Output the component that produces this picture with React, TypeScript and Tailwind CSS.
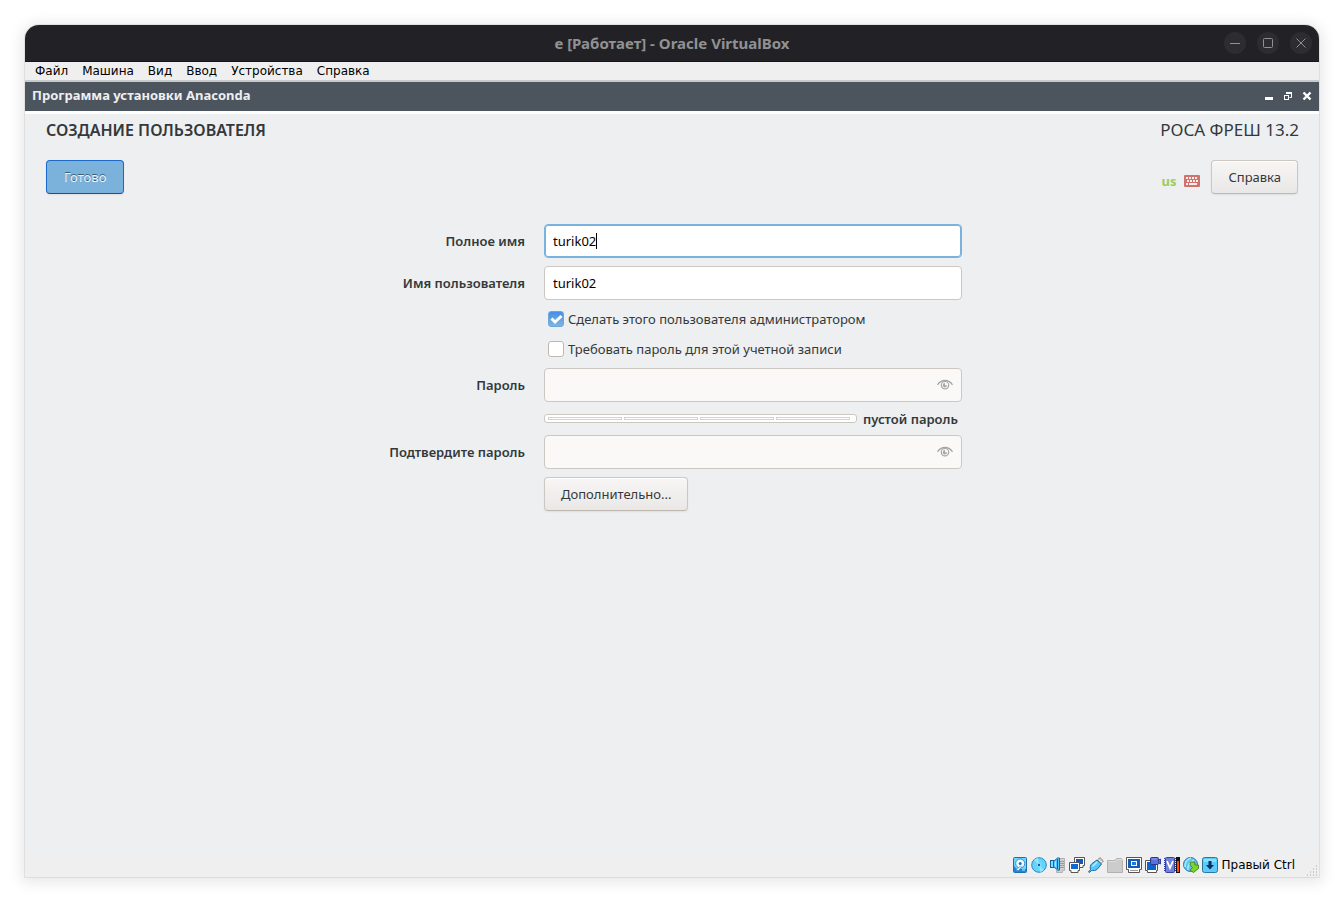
import { useState } from 'react'
import type { ReactNode } from 'react'
import { clsx } from 'clsx'

const menus = ['Файл', 'Машина', 'Вид', 'Ввод', 'Устройства', 'Справка']

const Glyph = ({ children, size = 16 }: { children: ReactNode; size?: number }) => (
  <svg width={size} height={size} viewBox={`0 0 ${size} ${size}`} fill="none" aria-hidden="true">
    {children}
  </svg>
)

const titleButtons = [
  { name: 'minimize', icon: <path d="M3 8.5h10" /> },
  { name: 'maximize', icon: <rect x="3.5" y="3.5" width="9" height="9" rx="1" /> },
  { name: 'close', icon: <path d="M3.5 3.5l9 9M12.5 3.5l-9 9" /> },
]

function GuestControls() {
  return (
    <div className="flex items-center gap-[3px] text-white">
      <button aria-label="minimize guest">
        <Glyph><path d="M4 9h8v3H4z" fill="currentColor" /></Glyph>
      </button>
      <button aria-label="restore guest">
        <Glyph>
          <path d="M6.5 5.5v-1h5v5h-2" stroke="currentColor" />
          <path d="M6 4h6v2H6z" fill="currentColor" />
          <rect x="4.5" y="7.5" width="4" height="4" stroke="currentColor" fill="#4c545e" />
          <path d="M4 7h5v1H4z" fill="currentColor" />
        </Glyph>
      </button>
      <button aria-label="close guest">
        <Glyph><path d="M4.5 4.5l7 7M11.5 4.5l-7 7" stroke="currentColor" strokeWidth="2.4" /></Glyph>
      </button>
    </div>
  )
}

function EyeIcon() {
  return (
    <Glyph>
      <path d="M.5 7.800C2.500 4.700 5 3.500 8 3.500s5.500 1.200 7.500 4.300" stroke="#a5a6a4" strokeWidth="1.300" />
      <circle cx="8" cy="8.200" r="3.700" stroke="#a5a6a4" strokeWidth="1.200" />
      <path d="M8 6a2.200 2.200 0 1 0 2.200 2.300L8 8.500z" fill="#a5a6a4" />
    </Glyph>
  )
}

function KeyboardIcon() {
  return (
    <svg width="16" height="12" viewBox="0 0 16 12" aria-hidden="true">
      <rect width="16" height="12" rx="1" fill="#d3716d" />
      <path
        d="M2 3h12M3 6h11M2 9h12"
        stroke="#f4f0f0"
        strokeWidth="2"
        strokeDasharray="2 1"
        fill="none"
      />
      <path d="M5 8h6v2H5z" fill="#f4f0f0" />
    </svg>
  )
}

const statusIcons: { name: string; icon: ReactNode }[] = [
  {
    name: 'Жёсткие диски',
    icon: (
      <>
        <rect x="1.500" y=".5" width="13" height="15" rx="1" fill="#6bd6fd" stroke="#1d6fb0" />
        <path d="M2 9l3 3h9v3H2z" fill="#1b86da" />
        <circle cx="8.200" cy="6.500" r="4.500" fill="#eefaff" stroke="#2a7ab8" strokeWidth=".8" />
        <circle cx="8.200" cy="6.500" r="1.500" fill="#1674c9" />
        <path d="M3.500 13.500L8.500 9l1 1-3 3.500z" fill="#fff" stroke="#1463a8" strokeWidth=".5" />
        <path d="M10 13h3" stroke="#bff0ff" />
      </>
    ),
  },
  {
    name: 'Оптические диски',
    icon: (
      <>
        <circle cx="8" cy="8" r="7.300" fill="#63d4fd" stroke="#2a86bb" />
        <path d="M8 8L3 3a7 7 0 0 1 4-2zM8 8l5 5a7 7 0 0 1-4 2z" fill="#93e4ff" />
        <circle cx="8" cy="8" r="2.200" fill="#8be6ff" />
        <circle cx="8" cy="8" r="1.200" fill="#165a9d" />
      </>
    ),
  },
  {
    name: 'Аудио',
    icon: (
      <>
        <path d="M9.500 1.500h5v12h-2v2h-6v-2h3z" fill="#cfcfcf" stroke="#b2b2b2" />
        <path d="M10 4.500h4M10 6.500h4M10 8.500h4M10 10.500h4" stroke="#9a9a9a" />
        <rect x=".5" y="3.500" width="3" height="7" fill="#7bdcff" stroke="#1b5f98" />
        <path d="M3.500 4.500l4-3.500h2v12h-2l-4-3.500z" fill="#54c6fb" stroke="#1b68a6" />
        <path d="M7.500 2v10" stroke="#1b5f98" />
        <path d="M5.500 4.500v5" stroke="#a9eeff" />
      </>
    ),
  },
  {
    name: 'Сеть',
    icon: (
      <>
        <path d="M5.500 .5h10v8h-1.500v2h-7v-2H5.500z" fill="#fff" stroke="#555" />
        <rect x="7" y="2" width="7" height="5" fill="#1a55b4" />
        <path d="M.5 5.500h10v8H9v2H2v-2H.5z" fill="#fff" stroke="#555" />
        <rect x="2" y="7" width="7" height="5" fill="#1268cf" />
      </>
    ),
  },
  {
    name: 'USB',
    icon: (
      <>
        <path d="M9.500 3L12 .7l3.300 3.200L13 6.500z" fill="#fff" stroke="#777" />
        <path d="M12 2.500l1.300 1.300" stroke="#555" />
        <path d="M9 3l4.500 4-4 5c-2 2-4.500 1.500-6 1.500L1.500 15.500.5 15l2-2.500C2 10 2 8.500 4 6.500z" fill="#54c8fa" stroke="#24679d" />
        <path d="M4.500 9.500L9 5" stroke="#b4f0ff" strokeWidth="1.500" />
      </>
    ),
  },
  {
    name: 'Общие папки',
    icon: (
      <>
        <path d="M.5 3.500h8l1-2h5l1 2v12H.5z" fill="#ccc" stroke="#b1b1b1" />
        <path d="M1 4.500h8l1-2h5" stroke="#dedede" />
      </>
    ),
  },
  {
    name: 'Дисплей',
    icon: (
      <>
        <path d="M.5 .5h15v12h-2v3h-11v-3h-2z" fill="#fff" stroke="#555" />
        <rect x="2" y="2" width="12" height="9" fill="#155bba" />
        <rect x="5.500" y="4.500" width="5" height="4" fill="#2478d8" stroke="#fff" />
        <path d="M4 13.500h8" stroke="#999" />
      </>
    ),
  },
  {
    name: 'Запись',
    icon: (
      <>
        <path d="M.5 3.500h12v10h-1v2h-9v-2h-2z" fill="#fff" stroke="#555" />
        <rect x="2" y="5" width="9" height="8" fill="#0b63cc" />
        <rect x="5.500" y=".5" width="8" height="7" rx="1" fill="#5c70da" stroke="#293884" />
        <path d="M7 2h5" stroke="#95a4ee" />
        <path d="M13.500 3l2-1v5l-2-1z" fill="#5c70da" stroke="#35459a" />
      </>
    ),
  },
  {
    name: 'Процессор',
    icon: (
      <>
        <path d="M.5 1v14M11.500 1v14" stroke="#303c98" strokeDasharray="1 1" />
        <rect x="1.500" y=".5" width="9" height="15" rx="1" fill="#7181d6" stroke="#36419a" />
        <path d="M3 4l3 7 3-7" stroke="#fff" strokeWidth="1.800" />
        <path d="M12 0h4v16h-4z" fill="#111" />
        <path d="M13 4h2v11h-2z" fill="#ff4a00" />
      </>
    ),
  },
  {
    name: 'Интеграция мыши',
    icon: (
      <>
        <circle cx="7.500" cy="7.500" r="7" fill="#5cc3f1" stroke="#2f76a8" />
        <path d="M2 10C2 5 5 2 8 1M5 13C4 9 7 5 11 3" stroke="#a5e8ff" strokeWidth="1.500" />
        <path d="M7.500 5h4l.5 3h3.500v3.500l-5 4L7 13l2.500-2.500L7 8z" fill="#7ed32c" stroke="#4a8a20" strokeLinejoin="round" />
      </>
    ),
  },
  {
    name: 'Клавиатура',
    icon: (
      <>
        <rect x=".5" y=".5" width="15" height="15" rx="2" fill="#5bccf7" stroke="#2778a2" />
        <path d="M2 2h12v3H2z" fill="#8adfff" />
        <path d="M6.500 4h3v4H12l-4 4.500L4 8h2.500z" fill="#0d2f67" />
      </>
    ),
  },
]

const labelClass = 'justify-self-end text-[13px] leading-4 font-semibold whitespace-nowrap'
const fieldClass = 'flex h-[34px] w-full items-center rounded-[4px] border px-2'
const buttonClass =
  'h-[34px] rounded-[4px] border border-[#cdc7c2] border-b-[#bfb8b1] bg-linear-to-b from-[#f7f6f5] to-[#eae8e6] px-4 pt-0.5 text-[13px] shadow-[inset_0_1px_0_#fff,0_1px_2px_rgba(0,0,0,0.07)]'

function CheckOption({
  label,
  checked,
  onChange,
}: {
  label: string
  checked: boolean
  onChange: (value: boolean) => void
}) {
  return (
    <label className="col-start-2 flex h-[22px] items-center gap-1 pl-1 text-[13px]">
      <span className="grid size-4 place-items-center">
        <input
          type="checkbox"
          checked={checked}
          onChange={e => onChange(e.target.checked)}
          className="col-start-1 row-start-1 size-4 appearance-none rounded-[3px] border border-[#bfb8b1] bg-white checked:border-[#6ba6dd] checked:bg-linear-to-b checked:from-[#458fe6] checked:to-[#7db5dd]"
        />
        {checked && (
          <svg width="16" height="16" viewBox="0 0 16 16" className="pointer-events-none col-start-1 row-start-1" aria-hidden="true">
            <path d="M3.500 7.500l3.500 3.500L13.500 5" stroke="#fff" strokeWidth="3" fill="none" />
          </svg>
        )}
      </span>
      <span className="pt-0.5">{label}</span>
    </label>
  )
}

function PasswordField({ id, disabled }: { id: string; disabled: boolean }) {
  const [visible, setVisible] = useState(false)

  return (
    <div className={clsx(fieldClass, 'border-[#cdc7c2]', disabled ? 'bg-[#faf9f8]' : 'bg-white')}>
      <input
        id={id}
        type={visible ? 'text' : 'password'}
        disabled={disabled}
        className="min-w-0 flex-1 bg-transparent text-[13px] outline-none"
      />
      <button type="button" aria-label="toggle password" onClick={() => setVisible(!visible)}>
        <EyeIcon />
      </button>
    </div>
  )
}

function UserForm() {
  const [fullName, setFullName] = useState('turik02')
  const [userName, setUserName] = useState('turik02')
  const [isAdmin, setIsAdmin] = useState(true)
  const [needsPassword, setNeedsPassword] = useState(false)

  return (
    <form
      className="grid grid-cols-[134px_418px] items-center justify-center gap-x-[19px] gap-y-2 pl-[9px]"
      onSubmit={e => e.preventDefault()}
    >
      <label htmlFor="full-name" className={labelClass}>Полное имя</label>
      <div className={clsx(fieldClass, 'border-[#79b2dd] bg-white ring-1 ring-[#79b2dd] ring-inset')}>
        <input
          id="full-name"
          value={fullName}
          onChange={e => setFullName(e.target.value)}
          className="field-sizing-content max-w-full pt-0.5 text-[13px] text-black caret-transparent outline-none"
        />
        <span className="h-4 w-px bg-black" />
      </div>

      <label htmlFor="user-name" className={labelClass}>Имя пользователя</label>
      <div className={clsx(fieldClass, 'border-[#cdc7c2] bg-white')}>
        <input
          id="user-name"
          value={userName}
          onChange={e => setUserName(e.target.value)}
          className="min-w-0 flex-1 pt-0.5 text-[13px] text-black outline-none"
        />
      </div>

      <CheckOption label="Сделать этого пользователя администратором" checked={isAdmin} onChange={setIsAdmin} />
      <CheckOption label="Требовать пароль для этой учетной записи" checked={needsPassword} onChange={setNeedsPassword} />

      <label htmlFor="password" className={labelClass}>Пароль</label>
      <PasswordField id="password" disabled={!needsPassword} />

      <div className="col-start-2 flex h-[17px] items-center gap-1.5">
        <div
          role="meter"
          aria-valuenow={0}
          className="flex h-[9px] w-[313px] items-center gap-0.5 rounded-[3px] border border-[#cdc7c2] bg-white pr-1.5 pl-[3px]"
        >
          {[0, 1, 2, 3].map(n => (
            <span key={n} className="h-[3px] flex-1 border border-[#d0d5d3]" />
          ))}
        </div>
        <span className="text-[13px] leading-4 font-semibold">пустой пароль</span>
      </div>

      <label htmlFor="confirm" className={labelClass}>Подтвердите пароль</label>
      <PasswordField id="confirm" disabled={!needsPassword} />

      <button type="button" className={clsx(buttonClass, 'col-start-2 justify-self-start')}>
        Дополнительно...
      </button>
    </form>
  )
}

export default function App() {
  return (
    <div className="flex min-h-screen flex-col bg-white px-[25px] pt-[25px] pb-6">
      <div className="flex flex-1 flex-col rounded-t-[14px] bg-[#eeeff1] font-['Noto_Sans',sans-serif] text-[#33393b] shadow-[0_0_0_1px_rgba(0,0,0,0.07),0_2px_14px_4px_rgba(0,0,0,0.09)]">
        <header className="grid h-[37px] grid-cols-[1fr_auto_1fr] items-center rounded-t-[14px] border-b border-[#17171a] bg-[#222226] px-[7px]">
          <h1 className="col-start-2 text-[15px] font-bold text-[#919193]">е [Работает] - Oracle VirtualBox</h1>
          <div className="flex justify-end gap-[11px]">
            {titleButtons.map(b => (
              <button
                key={b.name}
                aria-label={b.name}
                className="grid size-[22px] place-items-center rounded-full bg-[#2d2d31] text-[#919193]"
              >
                <svg width="16" height="16" viewBox="0 0 16 16" fill="none" stroke="currentColor">{b.icon}</svg>
              </button>
            ))}
          </div>
        </header>

        <nav className="flex h-5 items-center gap-3.5 border-b-2 border-[#c9cacc] bg-[#efefef] px-2.5 font-['DejaVu_Sans',sans-serif] text-xs text-black">
          {menus.map(m => (
            <button key={m}>{m}</button>
          ))}
        </nav>

        <div className="flex h-[29px] items-center justify-between bg-[#4c545e] pr-1 pb-0.5 pl-[7px]">
          <h2 className="text-[13px] font-bold text-[#eeeff1]">Программа установки Anaconda</h2>
          <GuestControls />
        </div>

        <main className="flex flex-1 flex-col border-t-3 border-white">
          <div className="flex justify-between pt-1 pr-5 pl-[21px]">
            <h3 className="text-base font-semibold">СОЗДАНИЕ ПОЛЬЗОВАТЕЛЯ</h3>
            <p className="text-[17px] leading-6">РОСА ФРЕШ 13.2</p>
          </div>
          <div className="flex justify-between pt-[18px] pr-[21px] pb-[30px] pl-[21px]">
            <button className="h-[34px] rounded-[4px] border border-[#1b6acb] border-b-[#15539e] bg-[#7ab2dc] px-[17px] pt-0.5 text-[13px] text-[#eef3f8] shadow-[0_1px_2px_rgba(0,0,0,0.07)] text-shadow-[0_-1px_0_rgba(0,0,0,0.5)]">
              Готово
            </button>
            <div className="flex items-center">
              <span className="pt-2 pr-2 text-[13px] leading-4 font-bold text-[#9acd5c]">us</span>
              <span className="pt-2 pr-[11px]"><KeyboardIcon /></span>
              <button className={buttonClass}>Справка</button>
            </div>
          </div>
          <UserForm />
        </main>

        <footer className="flex h-6 items-center justify-end gap-[3px] bg-[#efefef] pr-px font-['DejaVu_Sans',sans-serif] text-xs text-black">
          {statusIcons.map(s => (
            <button key={s.name} aria-label={s.name}><Glyph>{s.icon}</Glyph></button>
          ))}
          <span className="pr-2">Правый Ctrl</span>
          <svg width="12" height="12" viewBox="0 0 12 12" className="self-end" aria-hidden="true">
            <path
              d="M10 1h1M7 4h1M10 4h1M4 7h1M7 7h1M10 7h1M1 10h1M4 10h1M7 10h1M10 10h1"
              stroke="#aaa"
            />
          </svg>
        </footer>
      </div>
    </div>
  )
}
